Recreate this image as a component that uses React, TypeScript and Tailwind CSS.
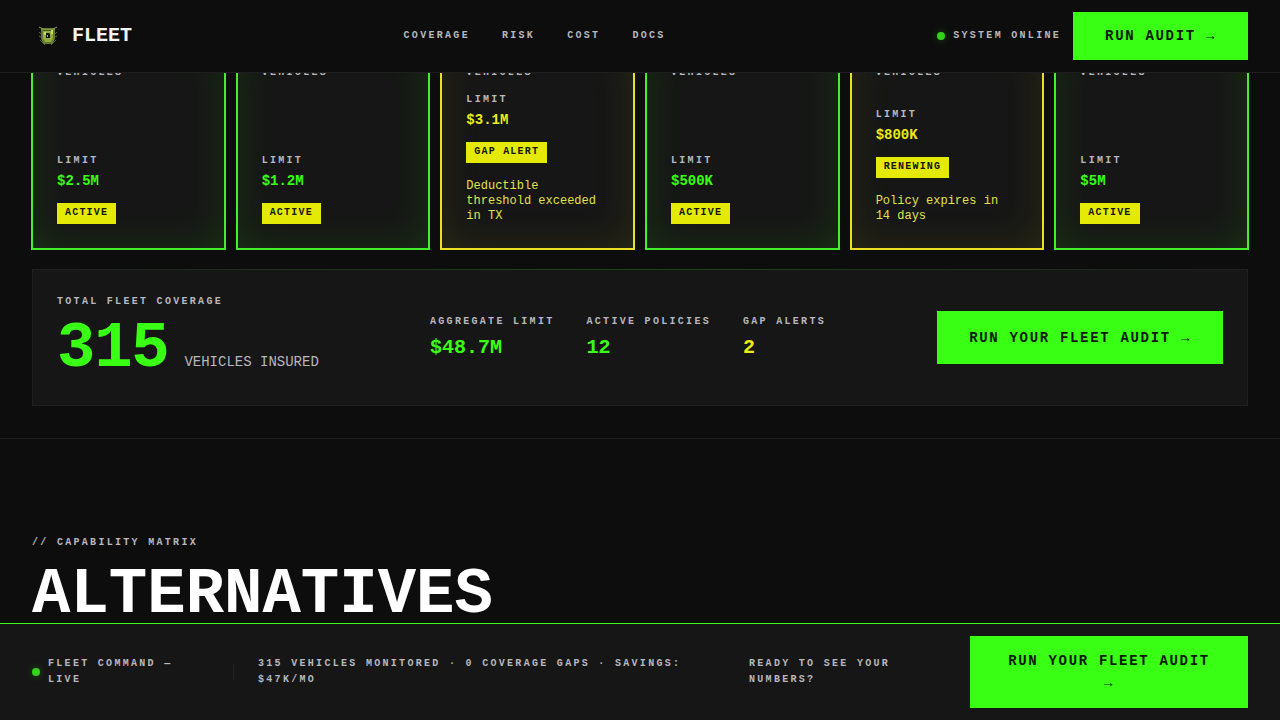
import clsx from "clsx";

interface Policy {
  id: number;
  limit: string;
  status: string;
  isAlert: boolean;
  note?: string;
}

const navItems = ["COVERAGE", "RISK", "COST", "DOCS"];

const policies: Policy[] = [
  { id: 1, limit: "$2.5M", status: "ACTIVE", isAlert: false },
  { id: 2, limit: "$1.2M", status: "ACTIVE", isAlert: false },
  {
    id: 3,
    limit: "$3.1M",
    status: "GAP ALERT",
    isAlert: true,
    note: "Deductible threshold exceeded in TX",
  },
  { id: 4, limit: "$500K", status: "ACTIVE", isAlert: false },
  {
    id: 5,
    limit: "$800K",
    status: "RENEWING",
    isAlert: true,
    note: "Policy expires in 14 days",
  },
  { id: 6, limit: "$5M", status: "ACTIVE", isAlert: false },
];

const stats = [
  { label: "AGGREGATE LIMIT", value: "$48.7M", isAlert: false },
  { label: "ACTIVE POLICIES", value: "12", isAlert: false },
  { label: "GAP ALERTS", value: "2", isAlert: true },
];

const labelClass =
  "text-[10px] leading-4 font-bold tracking-[0.23em] text-[#b8b8be]";
const buttonClass =
  "bg-[#39ff14] px-8 text-sm font-bold tracking-[0.12em] text-[#0d1a0a] cursor-pointer";

function Logo() {
  return (
    <svg
      viewBox="0 0 32 32"
      className="size-8"
      fill="none"
      aria-hidden="true"
    >
      <path d="M9 8h14v11l-3 5h-8l-3-5z" fill="#43561f" />
      <path d="M7 7l4 2h10l4-2" stroke="#8fa83e" strokeWidth="1" />
      <path d="M9 9.5h14M10 10v9l2 4h8l2-4v-9" stroke="#7f9a3a" />
      <path d="M11 11h10v8l-2 3h-6l-2-3z" fill="#93ab42" />
      <path d="M19 10h2v4h-2zM12 12h2v3h-2z" fill="#cddc5a" />
      <path d="M14 13h3l1 1v4h-4z" fill="#10160a" />
      <path d="M15 15h1v2h-1z" fill="#a4bd4a" />
      <path
        d="M7 12l2 2M7 16l2 1M25 12l-2 2M25 16l-2 1M8 20l5 5M24 20l-5 5"
        stroke="#56692a"
        strokeWidth="1"
      />
    </svg>
  );
}

function StatusDot() {
  return (
    <span className="size-2 shrink-0 rounded-full bg-[#32d41a] shadow-[0_0_8px_rgba(57,255,20,0.3)]" />
  );
}

function PolicyCard({ policy }: { policy: Policy }) {
  return (
    <article
      className={clsx(
        "flex min-h-[211px] flex-col items-start border-2 bg-[#161616] p-6",
        policy.isAlert
          ? "border-[#e8e020] shadow-[inset_0_0_40px_rgba(230,230,0,0.1)]"
          : "border-[#45ee2c] shadow-[inset_0_0_40px_rgba(57,255,20,0.12)]"
      )}
    >
      <p className={labelClass}>VEHICLES</p>
      <p className={clsx(labelClass, "mt-auto")}>LIMIT</p>
      <p
        className={clsx(
          "mt-0.5 text-sm font-bold",
          policy.isAlert ? "text-[#eaea14]" : "text-[#39ff14]"
        )}
      >
        {policy.limit}
      </p>
      <span className="mt-3 bg-[#e4ea06] px-2 pt-[3px] pb-[5px] text-[10px] leading-[13px] font-bold tracking-[0.12em] text-[#16160a]">
        {policy.status}
      </span>
      {policy.note && (
        <p className="mt-4 text-xs leading-[15px] text-[#e2e24a]">
          {policy.note}
        </p>
      )}
    </article>
  );
}

export default function App() {
  return (
    <div className="min-h-screen bg-[#0d0d0d] font-['Liberation_Mono',monospace]">
      {/* Header */}
      <header className="fixed inset-x-0 top-0 z-10 flex items-center justify-between border-b border-[#1e1e1e] bg-[#0d0d0d] px-8 py-3">
        <a href="#" className="flex items-center gap-2">
          <Logo />
          <span className="text-xl font-bold text-[#f4f4f4]">FLEET</span>
        </a>
        <nav className="flex gap-8">
          {navItems.map((item) => (
            <a key={item} href="#" className={labelClass}>
              {item}
            </a>
          ))}
        </nav>
        <div className="flex items-center gap-3">
          <div className="flex items-center gap-2">
            <StatusDot />
            <span className={labelClass}>SYSTEM ONLINE</span>
          </div>
          <button type="button" className={clsx(buttonClass, "h-12")}>
            RUN AUDIT →
          </button>
        </div>
      </header>

      <main>
        {/* Policies */}
        <section className="border-b border-[#1e1e1e] pt-[39px] pb-8">
          <div className="grid grid-cols-6 gap-[10px] px-[31px]">
            {policies.map((policy) => (
              <PolicyCard key={policy.id} policy={policy} />
            ))}
          </div>

          {/* Fleet totals */}
          <div className="relative mx-8 mt-[19px] flex items-center justify-between border border-[#1f2120] bg-[#161616] p-6">
            <div className="absolute inset-x-0 -top-px h-px bg-linear-to-r from-transparent via-[#39ff14]/15 to-transparent" />
            <div>
              <p className={labelClass}>TOTAL FLEET COVERAGE</p>
              <p className="mt-2 flex items-baseline gap-4">
                <span className="text-[64px] leading-[63px] font-bold tracking-[-0.02em] text-[#39ff14]">
                  315
                </span>
                <span className="text-sm text-[#b8b8be]">VEHICLES INSURED</span>
              </p>
            </div>
            <dl className="flex gap-8">
              {stats.map((stat) => (
                <div key={stat.label}>
                  <dt className={labelClass}>{stat.label}</dt>
                  <dd
                    className={clsx(
                      "mt-1 text-xl font-bold",
                      stat.isAlert ? "text-[#eaea14]" : "text-[#39ff14]"
                    )}
                  >
                    {stat.value}
                  </dd>
                </div>
              ))}
            </dl>
            <button type="button" className={clsx(buttonClass, "h-[53px]")}>
              RUN YOUR FLEET AUDIT →
            </button>
          </div>
        </section>

        {/* Alternatives */}
        <section className="px-8 pt-24">
          <p className={labelClass}>// CAPABILITY MATRIX</p>
          <h2 className="mt-3 text-[64px] leading-[64px] font-bold text-white">
            ALTERNATIVES
          </h2>
        </section>
      </main>

      {/* Bottom bar */}
      <aside className="fixed inset-x-0 bottom-0 z-10 flex items-center gap-6 border-t border-[#39ff14] bg-[#161616] px-8 py-3">
        <div className="flex w-[177px] shrink-0 items-center gap-2">
          <StatusDot />
          <p className={labelClass}>FLEET COMMAND — LIVE</p>
        </div>
        <div className="h-4 w-px bg-[#222222]" />
        <p className={clsx(labelClass, "flex-1")}>
          315 VEHICLES MONITORED · 0 COVERAGE GAPS · SAVINGS: $47K/MO
        </p>
        <p className={clsx(labelClass, "w-[197px]")}>
          READY TO SEE YOUR NUMBERS?
        </p>
        <button
          type="button"
          className={clsx(buttonClass, "h-[72px] w-[278px] leading-[22px]")}
        >
          RUN YOUR FLEET AUDIT →
        </button>
      </aside>
    </div>
  );
}
